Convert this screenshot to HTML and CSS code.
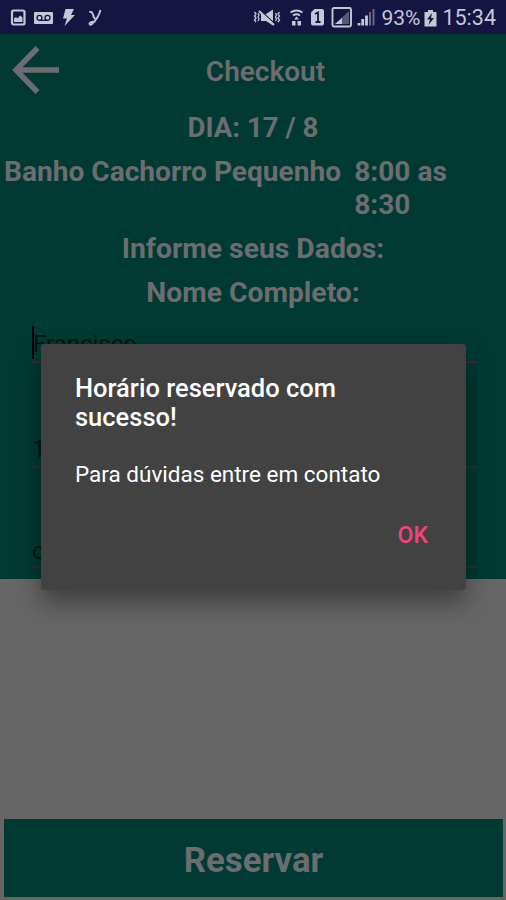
FILE: index.html
```html
<!DOCTYPE html>
<html lang="pt-BR">

<head>
    <meta charset="UTF-8">
    <meta name="viewport" content="width=device-width, initial-scale=1.0">
    <title>Checkout</title>
    <link rel="stylesheet" href="styles.css">
</head>

<body>
    <!-- Status bar -->
    <div class="status-bar">
        <div class="status-left">
            <svg width="96" height="20" viewBox="0 0 96 20" fill="none">
                <!-- picture -->
                <rect x="2" y="2.500" width="12.500" height="14" rx="1.500" stroke="currentColor" stroke-width="2.200" />
                <path d="M4 14V10.500l2-1.500 1.500 1.500L10 7.500l2.500 2V14z" fill="currentColor" />
                <!-- voicemail -->
                <rect x="24" y="4" width="19" height="12" rx="1" fill="currentColor" />
                <g stroke="#151542" stroke-width="1.300">
                    <circle cx="29.500" cy="9.800" r="2.500" />
                    <circle cx="37.500" cy="9.800" r="2.500" />
                    <path d="M29.500 12.300h8" />
                </g>
                <!-- bolt -->
                <path d="M55.500 1H64l-3 6h4L54.500 18l2.500-7.500h-4z" fill="currentColor" />
                <!-- y logo -->
                <path d="M79.500 4.500q2-2 3.500 2 .8 4 2.500 4M90.500 2q-2 8-9 14.500-2 1-2-1 1-2 6-2" stroke="currentColor" stroke-width="1.900" />
            </svg>
        </div>
        <div class="status-right">
            <svg width="124" height="22" viewBox="0 0 124 22" fill="none">
                <!-- muted, vibrating -->
                <path d="M1.500 5l1.500 2-1.500 2L3 11l-1.500 2L3 15M5 6l1 2-1 2 1 2-1 2M26.500 5L25 7l1.500 2-1.500 2 1.500 2-1.500 2M22.500 6l1 2-1 2 1 2-1 2" stroke="currentColor" stroke-width="1.300" />
                <path d="M8 7h5l7-4.500v16L13 14H8z" fill="currentColor" />
                <path d="M8 4l13 12" stroke="#151542" stroke-width="1.200" />
                <path d="M6 4l15 14" stroke="currentColor" stroke-width="2" />
                <!-- wifi -->
                <path d="M37.500 5.500q6-4 12 0M40 8.500q3.500-2.500 7 0" stroke="currentColor" stroke-width="1.900" />
                <path d="M43.500 9.500l2.500 3h-5zM39 14h3.500v4.500H39zM44.500 14H48v4.500h-3.500z" fill="currentColor" />
                <!-- sim 1 -->
                <path d="M61.500 2H69q2 0 2 2v12.500q0 2-2 2h-9q-2 0-2-2v-11z" fill="currentColor" />
                <path d="M62 7l3-1.500V15M62.500 15h5" stroke="#151542" stroke-width="1.800" />
                <!-- signals -->
                <rect x="79.500" y="1" width="18.500" height="18.500" rx="1.500" stroke="currentColor" stroke-width="1.900" />
                <path d="M82 17L96 4v13z" fill="#56577d" />
                <path d="M82 17l7-6v6z" fill="currentColor" />
                <path d="M106 18.500V16M109.700 18.500V12M113.500 18.500V8.500" stroke="currentColor" stroke-width="2.800" />
                <path d="M117 18.500V5M120.500 18.500V2" stroke="#67688a" stroke-width="2" />
            </svg>
            <span class="battery-text">93%</span>
            <svg width="13" height="18" viewBox="0 0 13 18">
                <path d="M4 1h5v2h3.500v14.500H.5V3H4z" fill="currentColor" />
                <path d="M8 4L3 10.500h3L4.500 16 10 9H7z" fill="#151542" />
            </svg>
            <span class="clock">15:34</span>
        </div>
    </div>

    <!-- Checkout form -->
    <div class="checkout">
        <div class="top-bar">
            <svg class="back" width="48" height="48" viewBox="0 0 48 48" fill="none" stroke="currentColor" stroke-width="5.500">
                <path d="M25.500 2L4 24l21.500 22M4 24h43" />
            </svg>
            <h1>Checkout</h1>
        </div>
        <p class="label day">DIA: 17 / 8</p>
        <div class="service">
            <p>Banho Cachorro Pequenho</p>
            <p class="time">8:00 as 8:30</p>
        </div>
        <p class="label">Informe seus Dados:</p>
        <p class="label">Nome Completo:</p>
        <div class="fields">
            <div class="field active"><span class="cursor"></span>Francisco</div>
            <div class="field">1</div>
            <div class="field last">c</div>
        </div>
    </div>

    <button class="reserve">Reservar</button>

    <!-- Confirmation dialog -->
    <div class="dialog">
        <h2>Horário reservado com sucesso!</h2>
        <p>Para dúvidas entre em contato</p>
        <button class="ok">OK</button>
    </div>
</body>

</html>
```

FILE: styles.css
```css
* {
    box-sizing: border-box;
}

body {
    position: relative;
    display: flex;
    flex-direction: column;
    height: 900px;
    margin: 0;
    overflow: hidden;
    background-color: #666;
    font-family: Roboto, sans-serif;
}

h1,
h2,
p {
    margin: 0;
}

button {
    border: none;
    padding: 0;
    font-family: inherit;
}

/* Status bar */
.status-bar {
    display: flex;
    justify-content: space-between;
    align-items: center;
    height: 34px;
    padding: 2px 10px 0 10px;
    background-color: #151542;
    color: #c6c7d5;
}

.status-bar svg {
    display: block;
}

.status-right {
    display: flex;
    align-items: center;
    font-size: 22px;
    line-height: 32px;
}

.battery-text {
    margin: 0 4px 0 4px;
    font-size: 21px;
}

.clock {
    margin-left: 5px;
    font-size: 21.5px;
}

/* Form area */
.checkout {
    height: 545px;
    background-color: #003a33;
    color: #6b6d70;
    font-size: 28.3px;
    font-weight: bold;
    line-height: 33px;
}

.top-bar {
    display: grid;
    grid-template-columns: 60px 1fr 47px;
    align-items: center;
    height: 71px;
    padding-left: 12px;
}

.top-bar h1 {
    padding-top: 4px;
    font-size: 28px;
    font-weight: 600;
    text-align: center;
}

.label {
    margin-top: 11px;
    text-align: center;
}

.day {
    margin-top: 6px;
    font-size: 27.6px;
}

.service {
    display: flex;
    gap: 13px;
    margin-top: 11px;
    padding-left: 4px;
    font-size: 28.1px;
}

.time {
    width: 110px;
}

/* Inputs */
.fields {
    padding: 11px 29px 0 32px;
}

.field {
    display: flex;
    align-items: flex-end;
    height: 105px;
    padding-bottom: 2px;
    border-bottom: 2px solid #2b3036;
    color: #001612;
    font-size: 24px;
    font-weight: normal;
    line-height: 30px;
}

.field.active {
    height: 43px;
    border-color: #452539;
}

.field.last {
    height: 100px;
    padding-bottom: 0;
}

.cursor {
    width: 2px;
    height: 33px;
    margin-right: -1px;
    background-color: #000;
}

/* Bottom button */
.reserve {
    height: 78px;
    margin: auto 3px 3px 4px;
    padding-top: 4px;
    background-color: #003a33;
    color: #6b6d70;
    font-size: 34.8px;
    font-weight: bold;
}

/* Dialog over the form */
.dialog {
    position: absolute;
    top: 344px;
    left: 41px;
    display: flex;
    flex-direction: column;
    width: 425px;
    height: 246px;
    padding: 30px 34px 29px;
    border-radius: 3px;
    background-color: #424242;
    color: #fff;
    box-shadow: 0 12px 26px rgba(0, 0, 0, 0.4);
}

.dialog h2 {
    font-size: 25.5px;
    font-weight: 500;
    line-height: 29px;
}

.dialog p {
    margin-top: 28px;
    font-size: 22.5px;
    line-height: 28px;
}

.ok {
    align-self: flex-end;
    margin: 34px 4px 0 0;
    background: none;
    color: #f5427f;
    font-size: 23px;
    font-weight: 500;
    line-height: 28px;
}
```
